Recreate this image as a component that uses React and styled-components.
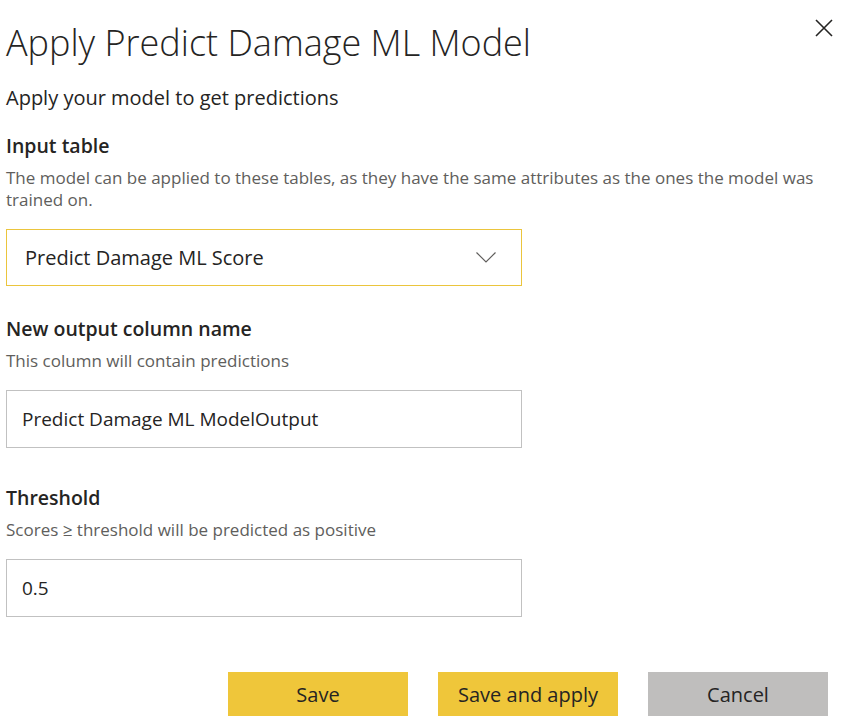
import React from "react";
import styled, { createGlobalStyle } from "styled-components";

const GlobalStyle = createGlobalStyle`
  body {
    margin: 0;
    background: #fff;
    font-family: "Open Sans", "Noto Sans", sans-serif;
    color: #252423;
  }
`;

const fields = [
  {
    label: "Input table",
    hint: "The model can be applied to these tables, as they have the same attributes as the ones the model was trained on.",
    value: "Predict Damage ML Score",
    select: true,
    gap: 21,
  },
  {
    label: "New output column name",
    hint: "This column will contain predictions",
    value: "Predict Damage ML ModelOutput",
    gap: 30,
  },
  {
    label: "Threshold",
    hint: "Scores \u2265 threshold will be predicted as positive",
    value: "0.5",
    gap: 37,
  },
];

const Chevron = () => (
  <svg width="20" height="11" viewBox="0 0 20 11">
    <path d="M0.5 0.5l9.5 9.5 9.5-9.5" fill="none" stroke="#605e5c" strokeWidth="1.2" />
  </svg>
);

const CloseIcon = () => (
  <svg width="18" height="18" viewBox="0 0 18 18">
    <path d="M1 1l16 16M17 1L1 17" stroke="#252423" strokeWidth="1.6" />
  </svg>
);

const App = () => {
  return (
    <>
      <GlobalStyle />
      <Dialog>
        <Header>
          <Title>Apply Predict Damage ML Model</Title>
          <CloseButton aria-label="Close">
            <CloseIcon />
          </CloseButton>
        </Header>
        <Subtitle>Apply your model to get predictions</Subtitle>
        {fields.map((f, idx) => (
          <Field key={idx} $gap={f.gap}>
            <Label>{f.label}</Label>
            <Hint>{f.hint}</Hint>
            <Box $select={f.select}>
              <BoxText $select={f.select}>{f.value}</BoxText>
              {f.select && <Chevron />}
            </Box>
          </Field>
        ))}
        <Footer>
          <Button $primary>Save</Button>
          <Button $primary>Save and apply</Button>
          <Button>Cancel</Button>
        </Footer>
      </Dialog>
    </>
  );
};

export default App;

/* ================== STYLES ================== */

const Dialog = styled.div`
  width: 822px;
  padding: 14px 17px 0 6px;
  display: flex;
  flex-direction: column;
`;

const Header = styled.div`
  display: flex;
  justify-content: space-between;
  align-items: flex-start;
`;

const Title = styled.h1`
  margin: 0;
  font-size: 36px;
  font-weight: 300;
  line-height: 58px;
  letter-spacing: 0;
  color: #252423;
`;

const CloseButton = styled.div`
  margin-top: 5px;
  margin-right: -5px;
  line-height: 0;
`;

const Subtitle = styled.p`
  margin: 12px 0 0;
  font-size: 20px;
  font-weight: 400;
  line-height: 28px;
  color: #252423;
`;

const Field = styled.div`
  display: flex;
  flex-direction: column;
  margin-top: ${(p) => p.$gap}px;
`;

const Label = styled.div`
  font-size: 19.5px;
  font-weight: 600;
  line-height: 26px;
  color: #252423;
`;

const Hint = styled.div`
  margin-top: 8px;
  max-width: 818px;
  font-size: 17px;
  line-height: 22px;
  color: #605e5c;
`;

const Box = styled.div`
  box-sizing: border-box;
  margin-top: 18px;
  width: 516px;
  height: ${(p) => (p.$select ? "57px" : "58px")};
  border: 1px solid ${(p) => (p.$select ? "#ebc53d" : "#c1c1c1")};
  display: flex;
  align-items: center;
  justify-content: space-between;
  padding: 0 25px 0 ${(p) => (p.$select ? "18px" : "15px")};
`;

const BoxText = styled.span`
  font-size: ${(p) => (p.$select ? "20px" : "19px")};
  color: #252423;
`;

const Footer = styled.div`
  display: flex;
  justify-content: flex-end;
  gap: 30px;
  margin-top: 55px;
`;

const Button = styled.div`
  width: 180px;
  height: 44px;
  display: flex;
  align-items: center;
  justify-content: center;
  font-size: 20px;
  color: #252423;
  background: ${(p) => (p.$primary ? "#efc63a" : "#bfbebd")};
`;
